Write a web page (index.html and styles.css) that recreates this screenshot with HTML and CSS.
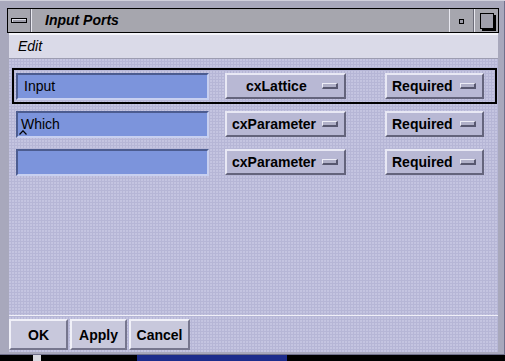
FILE: index.html
```html
<!DOCTYPE html>
<html>
<head>
<meta charset="utf-8">
<link rel="stylesheet" href="styles.css">
</head>
<body>
<div class="screen">
  <div class="window">
    <div class="titlebar">
      <div class="tb-btn menu-btn"><span class="bar"></span></div>
      <div class="title">Input Ports</div>
      <div class="tb-btn min-btn"><span class="dot"></span></div>
      <div class="tb-btn max-btn"><span class="sq"></span></div>
    </div>
    <div class="client">
      <div class="menubar"><span class="menu-item">Edit</span></div>
      <div class="body">
        <div class="rows">
          <div class="row selected">
            <div class="field">Input</div>
            <div class="opt opt-type center">cxLattice<span class="ind"></span></div>
            <div class="opt opt-req">Required<span class="ind"></span></div>
          </div>
          <div class="row">
            <div class="field">Which<svg class="caret" width="8" height="5" viewBox="0 0 8 5"><path d="M0.5 4.5 L4 0.8 L7.5 4.5" fill="none" stroke="#000" stroke-width="1.2"/></svg></div>
            <div class="opt opt-type">cxParameter<span class="ind"></span></div>
            <div class="opt opt-req">Required<span class="ind"></span></div>
          </div>
          <div class="row">
            <div class="field"></div>
            <div class="opt opt-type">cxParameter<span class="ind"></span></div>
            <div class="opt opt-req">Required<span class="ind"></span></div>
          </div>
        </div>
        <div class="actions">
          <button class="btn btn-ok">OK</button>
          <button class="btn btn-apply">Apply</button>
          <button class="btn btn-cancel">Cancel</button>
        </div>
      </div>
    </div>
  </div>
  <div class="desk">
    <span class="d1"></span><span class="d2"></span><span class="d3"></span><span class="d4"></span><span class="d5"></span>
  </div>
</div>
</body>
</html>
```
FILE: styles.css
```css
* { box-sizing: border-box; }
html, body { margin: 0; padding: 0; }
body {
  width: 505px; height: 361px; overflow: hidden;
  font-family: "Liberation Sans", Arial, sans-serif;
  background: #000;
}
.screen { width: 505px; height: 361px; display: flex; flex-direction: column; }
.window {
  width: 505px; height: 355px;
  background: #a8a8bc;
  padding: 7px 6px 3px 7px;
  border-top: 1px solid #d0d0dc;
  display: flex; flex-direction: column;
  box-shadow: inset -1px -1px 0 #70708c;
}
.titlebar {
  height: 25px;
  border: 1px solid #000;
  background: #a6a6ae;
  display: flex; align-items: stretch;
}
.tb-btn {
  display: flex; align-items: center; justify-content: center;
  border-left: 1px solid #e8e8f0;
  border-right: 1px solid #6c6c78;
}
.menu-btn { width: 23px; border-left: none; }
.menu-btn .bar {
  width: 16px; height: 5px; border: 1px solid #000; background: #9c9ca8;
  box-shadow: inset 1px 1px 0 #e0e0e8;
}
.title {
  flex: 1; padding-left: 13px;
  font-weight: bold; font-style: italic; font-size: 14px; line-height: 23px;
  color: #000;
  border-left: 1px solid #e8e8f0;
}
.min-btn { width: 25px; }
.min-btn .dot { width: 5px; height: 5px; border: 1px solid #000; background: #9c9ca8; margin-top: 2px; }
.max-btn { width: 24px; border-right: none; }
.max-btn .sq {
  width: 14px; height: 16px; border: 1px solid #000;
  box-shadow: 2px 2px 0 #000;
  background: #a0a0ac;
}
.client {
  flex: 1; display: flex; flex-direction: column;
  margin: 0 1px 0 2px;
}
.menubar {
  height: 26px;
  background: #dadae8;
  border-top: 2px solid #f4f4fa;
  border-bottom: 1px solid #9c9cb0;
  padding-left: 9px;
  font-style: italic; font-size: 14px; line-height: 22px; color: #000;
}
.body {
  flex: 1; display: flex; flex-direction: column;
  background: #b6b6d6;
  background-image: radial-gradient(circle at 1px 1px, #d4d4ec 0.6px, transparent 0.8px);
  background-size: 3px 3px;
}
.rows { flex: 1; padding: 9px 0 0 3px; display: flex; flex-direction: column; gap: 2px; }
.row {
  height: 36px; width: 485px;
  display: flex; align-items: center;
  border: 1px solid transparent;
  padding-left: 3px;
}
.row.selected { border: 2px solid #000; padding-left: 2px; }
.field {
  width: 193px; height: 27px;
  background: #7c94dc;
  border-top: 2px solid #4c5c90; border-left: 2px solid #4c5c90;
  border-bottom: 2px solid #c8d0f0; border-right: 2px solid #c8d0f0;
  font-size: 14px; line-height: 23px; padding-left: 6px; color: #000;
  position: relative;
}
.row:not(.selected) .field { padding-left: 3px; }
.caret { position: absolute; left: 1px; top: 17px; display: block; }
.opt {
  height: 26px; display: flex; align-items: center; justify-content: space-between;
  background: #b8b8d4;
  border-top: 2px solid #e8e8f4; border-left: 2px solid #e8e8f4;
  border-bottom: 2px solid #64647c; border-right: 2px solid #64647c;
  font-weight: bold; font-size: 14px; color: #000;
  padding: 0 6px 0 5px;
}
.opt-type { width: 121px; margin-left: 16px; }
.opt-type.center { padding-left: 19px; }
.opt-req { width: 99px; margin-left: 39px; }
.ind {
  width: 16px; height: 6px; background: #b0b0c8;
  border-top: 1px solid #ececf6; border-left: 1px solid #ececf6;
  border-bottom: 2px solid #585870; border-right: 2px solid #585870;
}
.actions {
  height: 37px;
  border-top: 1px solid #f0f0f8;
  display: flex; gap: 2px; padding: 3px 0 0 0;
}
.btn {
  height: 31px;
  background: #c8c8dc;
  border-top: 2px solid #f0f0f8; border-left: 2px solid #f0f0f8;
  border-bottom: 2px solid #76768e; border-right: 2px solid #76768e;
  font-family: "Liberation Sans", Arial, sans-serif;
  font-weight: bold; font-size: 14px; color: #000;
  padding: 0; margin: 0;
}
.btn-ok { width: 59px; }
.btn-apply { width: 57px; }
.btn-cancel { width: 61px; }
.desk { height: 6px; display: flex; background: #000; }
.desk span { display: block; height: 6px; }
.d1 { width: 33px; background: #000; }
.d2 { width: 8px; background: #d8d8e0; }
.d3 { width: 96px; background: #000; }
.d4 { width: 150px; background: #1c2c8c; }
.d5 { width: 60px; background: #000; }
```
